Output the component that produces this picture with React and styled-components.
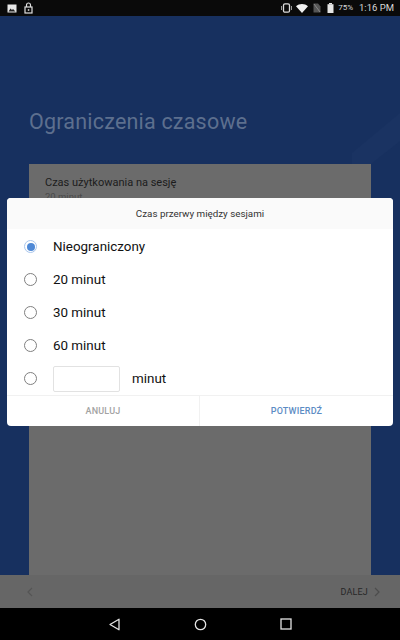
import React from 'react';
import styled, { createGlobalStyle } from 'styled-components';

const GlobalStyle = createGlobalStyle`
  html, body {
    margin: 0;
    padding: 0;
    background: #000;
  }
  * {
    box-sizing: border-box;
  }
`;

const Screen = styled.div`
  position: relative;
  width: 400px;
  height: 640px;
  overflow: hidden;
  display: flex;
  flex-direction: column;
  font-family: Roboto, "Liberation Sans", sans-serif;
`;

const StatusBar = styled.div`
  height: 16px;
  padding: 0 6px 0 7px;
  display: flex;
  align-items: center;
  justify-content: space-between;
  background: #0a0a0a;
`;

const StatusGroup = styled.div`
  display: flex;
  align-items: center;
`;

const StatusIcon = styled.svg`
  display: block;
  margin-right: ${({ $after }) => $after || 0}px;
`;

const StatusText = styled.span`
  color: #d8d8d8;
  font-size: ${({ $small }) => ($small ? 8 : 9.5)}px;
  line-height: 16px;
  margin-right: ${({ $after }) => $after || 0}px;
`;

const Main = styled.main`
  position: relative;
  flex: 1;
  min-height: 0;
  display: flex;
  flex-direction: column;
  padding: 94px 29px 0;
  background: #17305f;
`;

const Streak = styled.svg`
  position: absolute;
  top: 90px;
  right: 0;
`;

const Title = styled.h1`
  position: relative;
  margin: 0 0 30px;
  height: 24px;
  color: #5d6f8e;
  font-size: 21.5px;
  font-weight: 400;
  line-height: 24px;
  letter-spacing: 0.2px;
`;

const Card = styled.section`
  position: relative;
  flex: 1;
  padding: 12px 16px;
  background: #6b6b6b;
`;

const CardLabel = styled.div`
  color: #1c1c1c;
  font-size: 11px;
  line-height: 14px;
`;

const CardValue = styled.div`
  color: #4a4a4a;
  font-size: 9.5px;
  line-height: 14px;
`;

const BottomBar = styled.div`
  height: 33px;
  padding: 0 20px 0 27px;
  display: flex;
  align-items: center;
  justify-content: space-between;
  background: #666;
`;

const NextGroup = styled.div`
  display: flex;
  align-items: center;
  gap: 6px;
`;

const NextLabel = styled.span`
  color: #262626;
  font-size: 9px;
  letter-spacing: 0.2px;
`;

const NavBar = styled.nav`
  height: 32px;
  display: flex;
  align-items: center;
  justify-content: center;
  gap: 73px;
  background: #000;
`;

const Dialog = styled.div`
  position: absolute;
  top: 198px;
  left: 7px;
  width: 386px;
  height: 228px;
  display: flex;
  flex-direction: column;
  border-radius: 4px;
  overflow: hidden;
  background: #fff;
`;

const DialogHeader = styled.header`
  height: 31px;
  display: flex;
  align-items: center;
  justify-content: center;
  background: #fafafa;
  color: #333;
  font-size: 9.8px;
`;

const OptionList = styled.div`
  flex: 1;
  padding-top: 1px;
  display: flex;
  flex-direction: column;
`;

const OptionRow = styled.label`
  height: 33px;
  flex: none;
  padding-left: 17px;
  display: flex;
  align-items: center;
  gap: 16px;
  color: #111;
  font-size: 13.4px;
`;

const Radio = styled.span`
  width: 13px;
  height: 13px;
  flex: none;
  display: flex;
  align-items: center;
  justify-content: center;
  border-radius: 50%;
  border: 1.3px solid ${({ $checked }) => ($checked ? '#a9c6ec' : '#808080')};

  &::after {
    content: '';
    display: ${({ $checked }) => ($checked ? 'block' : 'none')};
    width: 8px;
    height: 8px;
    border-radius: 50%;
    background: #4f89d6;
  }
`;

const MinutesBox = styled.span`
  width: 67px;
  height: 26px;
  margin-right: -4px;
  border: 1px solid #e2e2e2;
  border-radius: 2px;
  background: #fff;
`;

const DialogFooter = styled.footer`
  height: 31px;
  display: grid;
  grid-template-columns: 192px 1fr;
  border-top: 1px solid #f1f1f1;
`;

const FooterButton = styled.button`
  border: 0;
  padding: 0;
  background: none;
  font-family: inherit;
  font-size: 9px;
  font-weight: 500;
  letter-spacing: 0.2px;
  color: ${({ $primary }) => ($primary ? '#5c8cc4' : '#a3a3a3')};
  border-left: ${({ $primary }) => ($primary ? '1px solid #f1f1f1' : '0')};
`;

const Chevron = ({ color, flip }) => (
  <svg width="6" height="10" viewBox="0 0 6 10">
    <path d={flip ? 'M5 1 1 5l4 4' : 'M1 1l4 4-4 4'} fill="none" stroke={color} strokeWidth="1.2" />
  </svg>
);

const options = ['20 minut', '30 minut', '60 minut'];

export default function App() {
  return (
    <>
      <GlobalStyle />
      <Screen>
        <StatusBar>
          <StatusGroup>
            <StatusIcon $after={7} width="10" height="9" viewBox="0 0 10 9">
              <rect x="0.5" y="0.5" width="9" height="8" fill="#e8e8e8" />
              <path d="M1.5 7.5 3.5 4.5l1.5 1.5 1-1 2.5 2.5z" fill="#222" />
            </StatusIcon>
            <StatusIcon width="9" height="12" viewBox="0 0 9 12">
              <path d="M2.5 5V3a2 2 0 0 1 4 0v2" fill="none" stroke="#e0e0e0" strokeWidth="1.2" />
              <rect x="1" y="5" width="7" height="6" fill="none" stroke="#e0e0e0" strokeWidth="1.2" />
              <rect x="3.8" y="7.2" width="1.5" height="1.6" fill="#e0e0e0" />
            </StatusIcon>
          </StatusGroup>
          <StatusGroup>
            <StatusIcon $after={3} width="13" height="10" viewBox="0 0 13 10">
              <rect x="3.5" y="0.8" width="6" height="8.4" rx="1.5" fill="none" stroke="#ddd" strokeWidth="1.3" />
              <path d="M1.5 3v4M11.5 3v4" stroke="#999" strokeWidth="1" />
            </StatusIcon>
            <StatusIcon $after={5} width="12" height="9" viewBox="0 0 12 9">
              <path d="M0 2.2C3.4-.6 8.6-.6 12 2.2L6 9z" fill="#f0f0f0" />
            </StatusIcon>
            <StatusIcon $after={6} width="8" height="10" viewBox="0 0 8 10">
              <path d="M0.5 9.5V0.5h4.5l2.5 3v6z" fill="#555" />
              <path d="M1 1l6 8" stroke="#888" strokeWidth="1" />
            </StatusIcon>
            <StatusIcon $after={4} width="7" height="10" viewBox="0 0 7 10">
              <rect x="2" y="0" width="3" height="1.2" fill="#e6e6e6" />
              <rect x="0.5" y="1.2" width="6" height="8.8" fill="#e6e6e6" />
            </StatusIcon>
            <StatusText $small $after={6}>75%</StatusText>
            <StatusText>1:16 PM</StatusText>
          </StatusGroup>
        </StatusBar>

        <Main>
          <Streak width="60" height="74" viewBox="0 0 60 74">
            <path d="M12 47 60 7V35L31 58H12z" fill="#1a3362" />
          </Streak>
          <Title>Ograniczenia czasowe</Title>
          <Card>
            <CardLabel>Czas użytkowania na sesję</CardLabel>
            <CardValue>20 minut</CardValue>
          </Card>
        </Main>

        <BottomBar>
          <Chevron color="#555" flip />
          <NextGroup>
            <NextLabel>DALEJ</NextLabel>
            <Chevron color="#4d4d4d" />
          </NextGroup>
        </BottomBar>

        <NavBar>
          <svg width="13" height="13" viewBox="0 0 13 13">
            <path d="M11 1.2v10.6L2 6.5z" fill="none" stroke="#e4e4e4" strokeWidth="1.3" strokeLinejoin="round" />
          </svg>
          <svg width="13" height="13" viewBox="0 0 13 13">
            <circle cx="6.5" cy="6.5" r="5.2" fill="none" stroke="#e4e4e4" strokeWidth="1.3" />
          </svg>
          <svg width="12" height="12" viewBox="0 0 12 12">
            <rect x="1" y="1" width="10" height="10" fill="none" stroke="#e4e4e4" strokeWidth="1.3" />
          </svg>
        </NavBar>

        <Dialog>
          <DialogHeader>Czas przerwy między sesjami</DialogHeader>
          <OptionList>
            <OptionRow>
              <Radio $checked />
              Nieograniczony
            </OptionRow>
            {options.map((option) => (
              <OptionRow key={option}>
                <Radio />
                {option}
              </OptionRow>
            ))}
            <OptionRow>
              <Radio />
              <MinutesBox />
              minut
            </OptionRow>
          </OptionList>
          <DialogFooter>
            <FooterButton>ANULUJ</FooterButton>
            <FooterButton $primary>POTWIERDŹ</FooterButton>
          </DialogFooter>
        </Dialog>
      </Screen>
    </>
  );
}
